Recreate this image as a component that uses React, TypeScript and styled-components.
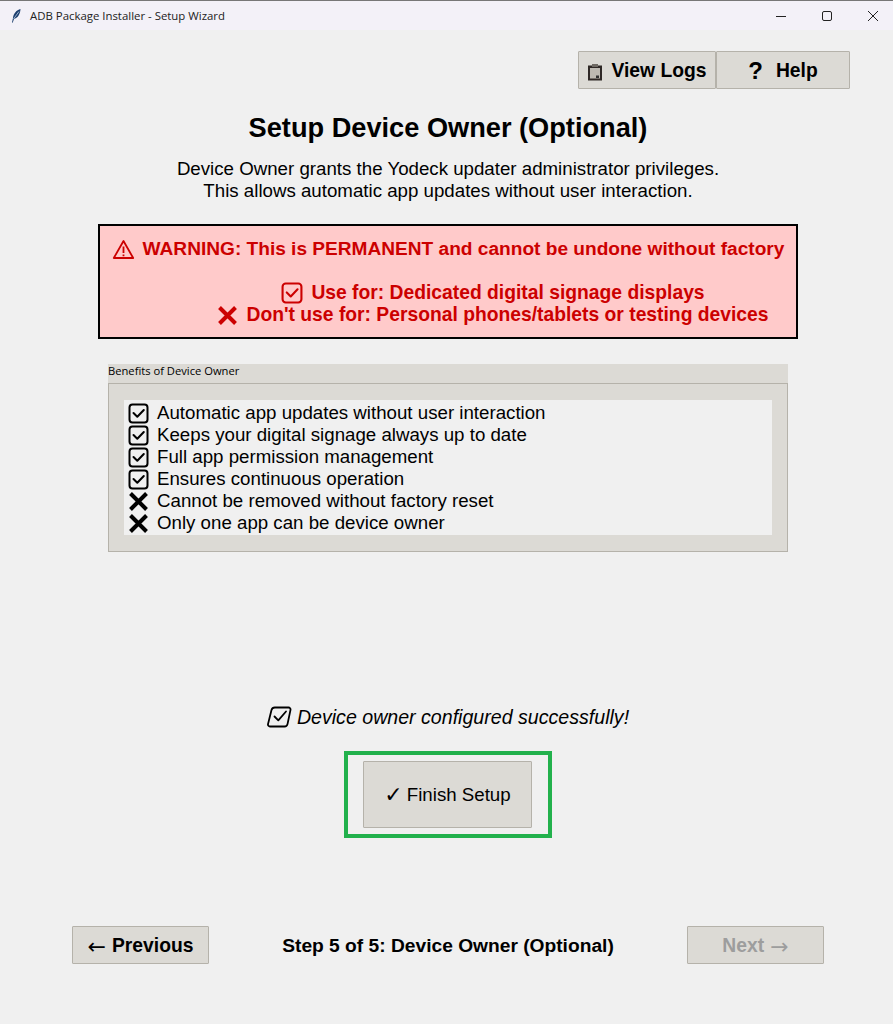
import React from 'react';
import styled, { createGlobalStyle } from 'styled-components';

const GlobalStyle = createGlobalStyle`
    html, body {
        margin: 0;
        padding: 0;
        background: #f0f0f0;
    }
    body {
        font-family: "Liberation Sans", Arial, sans-serif;
    }
`;

const benefits = [
    { ok: true, text: 'Automatic app updates without user interaction' },
    { ok: true, text: 'Keeps your digital signage always up to date' },
    { ok: true, text: 'Full app permission management' },
    { ok: true, text: 'Ensures continuous operation' },
    { ok: false, text: 'Cannot be removed without factory reset' },
    { ok: false, text: 'Only one app can be device owner' },
];

const CheckBox = ({ size = 21, color = '#000' }: { size?: number; color?: string }) => (
    <svg width={size} height={size} viewBox="0 0 21 21" fill="none" stroke={color} strokeWidth="2">
        <rect x="1.5" y="1.5" width="18" height="18" rx="3" />
        <path d="M5.5 10l3.8 3.8L15.800 7" strokeLinecap="round" strokeLinejoin="round" />
    </svg>
);

const Cross = ({ size = 21, color = '#000' }: { size?: number; color?: string }) => (
    <svg width={size} height={size} viewBox="0 0 21 21" fill="none" stroke={color} strokeWidth="4">
        <path d="M2.5 2.5l16 16M18.5 2.5l-16 16" />
    </svg>
);

const App = () => {
    return (
        <>
            <GlobalStyle />
            <Window>
                <TitleBar>
                    <svg width="16" height="16" viewBox="0 0 16 16">
                        <path d="M12.500 1C8.500 2 5.500 5.500 5 10l-1 4.500.7.2L6 11c3.500-.8 6.200-4.500 6.500-10z" fill="#1d3f6e" />
                        <path d="M11 3.500L5.500 11" stroke="#cfe0f5" strokeWidth="0.7" />
                    </svg>
                    <TitleText>ADB Package Installer - Setup Wizard</TitleText>
                    <WindowControls>
                        <svg width="12" height="12" viewBox="0 0 12 12" stroke="#222" fill="none">
                            <path d="M1 6.500h10" />
                        </svg>
                        <svg width="12" height="12" viewBox="0 0 12 12" stroke="#222" fill="none">
                            <rect x="1.500" y="1.500" width="9" height="9" rx="1.500" />
                        </svg>
                        <svg width="12" height="12" viewBox="0 0 12 12" stroke="#222" fill="none">
                            <path d="M1 1l10 10M11 1L1 11" />
                        </svg>
                    </WindowControls>
                </TitleBar>

                <Content>
                    <TopActions>
                        <TkButton $w={138} $h={38} $bold>
                            <LogsIcon>
                                <svg width="16" height="18" viewBox="0 0 16 18">
                                    <rect x="1" y="2.500" width="14" height="15" fill="#2f2826" />
                                    <rect x="3" y="5" width="10" height="10.500" fill="#bdb9b2" />
                                    <rect x="5" y="1" width="6" height="3" fill="#6f6a64" />
                                    <rect x="9" y="12.500" width="3" height="2.500" fill="#333" />
                                </svg>
                            </LogsIcon>
                            View Logs
                        </TkButton>
                        <TkButton $w={134} $h={38} $bold>
                            <HelpMark>?</HelpMark>
                            Help
                        </TkButton>
                    </TopActions>

                    <Title>Setup Device Owner (Optional)</Title>
                    <Intro>
                        Device Owner grants the Yodeck updater administrator privileges.
                        <br />
                        This allows automatic app updates without user interaction.
                    </Intro>

                    <WarningBox>
                        <WarningLine>
                            <svg width="23" height="21" viewBox="0 0 23 21" fill="none" stroke="#cc0000" strokeWidth="1.800">
                                <path d="M11.500 2L1.800 19h19.400z" strokeLinejoin="round" />
                                <path d="M11.500 7.500v6.500M11.500 15.500v1.800" />
                            </svg>
                            WARNING: This is PERMANENT and cannot be undone without factory
                        </WarningLine>
                        <WarningUse>
                            <WarningLine>
                                <CheckBox size={22} color="#cc0000" />
                                Use for: Dedicated digital signage displays
                            </WarningLine>
                            <WarningLine>
                                <Cross size={21} color="#cc0000" />
                                Don't use for: Personal phones/tablets or testing devices
                            </WarningLine>
                        </WarningUse>
                    </WarningBox>

                    <Benefits>
                        <BenefitsLabel>Benefits of Device Owner</BenefitsLabel>
                        <BenefitsFrame>
                            <BenefitsList>
                                {benefits.map(b => (
                                    <BenefitRow key={b.text}>
                                        {b.ok ? <CheckBox /> : <Cross />}
                                        {b.text}
                                    </BenefitRow>
                                ))}
                            </BenefitsList>
                        </BenefitsFrame>
                    </Benefits>

                    <Success>
                        <svg width="25" height="22" viewBox="0 0 25 22" fill="none" stroke="#000" strokeWidth="1.800">
                            <path d="M8 1.500h13.500a2 2 0 0 1 2 2.400l-3 14.200a3 3 0 0 1-3 2.400H3a2 2 0 0 1-2-2.400L4.500 4a3.500 3.500 0 0 1 3.500-2.500z" />
                            <path d="M7.500 10.500l3.800 3.800L19 5.500" strokeLinecap="round" strokeLinejoin="round" />
                        </svg>
                        Device owner configured successfully!
                    </Success>

                    <Highlight>
                        <TkButton $w={169} $h={67}>
                            <FinishCheck>✓</FinishCheck>
                            Finish Setup
                        </TkButton>
                    </Highlight>

                    <BottomNav>
                        <TkButton $w={137} $h={38} $bold>
                            <Arrow>←</Arrow>
                            Previous
                        </TkButton>
                        <StepLabel>Step 5 of 5: Device Owner (Optional)</StepLabel>
                        <TkButton $w={137} $h={38} $bold $disabled>
                            Next
                            <Arrow>→</Arrow>
                        </TkButton>
                    </BottomNav>
                </Content>
            </Window>
        </>
    );
};

const Window = styled.div`
    width: 893px;
    height: 1024px;
    background: #f0f0f0;
    overflow: hidden;
`;

const TitleBar = styled.div`
    height: 30px;
    box-sizing: border-box;
    border-top: 1px solid #777;
    background: #f3f1f8;
    display: flex;
    align-items: center;
    padding-left: 8px;
    gap: 6px;
`;

const TitleText = styled.span`
    font-family: "Open Sans", "Liberation Sans", sans-serif;
    font-size: 11.400px;
    color: #222;
`;

const WindowControls = styled.div`
    margin-left: auto;
    display: flex;
    gap: 34px;
    padding-right: 14px;
`;

const Content = styled.div`
    display: flex;
    flex-direction: column;
    align-items: center;
    width: 896px;
`;

const TkButton = styled.div<{ $w: number; $h: number; $bold?: boolean; $disabled?: boolean }>`
    width: ${props => props.$w}px;
    height: ${props => props.$h}px;
    box-sizing: border-box;
    padding-top: ${props => (props.$bold ? 2 : 0)}px;
    display: flex;
    align-items: center;
    justify-content: center;
    gap: 6px;
    background: #dcdad5;
    border: 1px solid #b5b2aa;
    border-radius: 1px;
    font-size: ${props => (props.$bold ? 19.3 : 18.7)}px;
    font-weight: ${props => (props.$bold ? 700 : 400)};
    color: ${props => (props.$disabled ? '#9d9d9d' : '#000')};
    white-space: pre;
`;

const FinishCheck = styled.span`
    font-family: "DejaVu Sans", sans-serif;
    font-size: 22px;
    font-weight: 400;
    margin-right: -2px;
`;

const Arrow = styled.span`
    font-family: "DejaVu Sans", sans-serif;
    font-size: 22px;
    font-weight: 400;
`;

const TopActions = styled.div`
    align-self: flex-end;
    display: flex;
    margin: 21px 46px 0 0;
`;

const LogsIcon = styled.span`
    display: flex;
    margin: 1px 2px 0 0;
`;

const HelpMark = styled.span`
    font-size: 24px;
    margin-right: 7px;
`;

const Title = styled.h1`
    margin: 24px 0 0;
    font-size: 27.200px;
    line-height: 30px;
    font-weight: 700;
    color: #000;
`;

const Intro = styled.p`
    margin: 15px 0 0;
    font-size: 18.700px;
    line-height: 22px;
    text-align: center;
    color: #000;
`;

const WarningBox = styled.div`
    width: 700px;
    height: 115px;
    margin-top: 22px;
    box-sizing: border-box;
    border: 2px solid #000;
    background: #ffcaca;
    padding-top: 12px;
    color: #cc0000;
    font-size: 19.100px;
    font-weight: 700;
    display: flex;
    flex-direction: column;
    align-items: center;
`;

const WarningLine = styled.div`
    height: 22px;
    display: flex;
    align-items: center;
    justify-content: center;
    gap: 8px;
    white-space: nowrap;
`;

const WarningUse = styled.div`
    margin: 22px 0 0 90px;
    font-size: 19.300px;
    display: flex;
    flex-direction: column;
`;

const Benefits = styled.div`
    width: 680px;
    margin-top: 25px;
`;

const BenefitsLabel = styled.div`
    height: 19px;
    line-height: 14px;
    background: #dcdad5;
    font-family: "Open Sans", "Liberation Sans", sans-serif;
    font-size: 11.200px;
    color: #000;
`;

const BenefitsFrame = styled.div`
    height: 169px;
    box-sizing: border-box;
    background: #dcdad5;
    border: 1px solid #b5b2aa;
    padding: 16px 15px;
`;

const BenefitsList = styled.div`
    height: 135px;
    box-sizing: border-box;
    background: #f0f0f0;
    padding-top: 2px;
`;

const BenefitRow = styled.div`
    height: 22px;
    display: flex;
    align-items: center;
    gap: 8px;
    padding-left: 4px;
    font-size: 18.700px;
    color: #000;
    white-space: nowrap;
`;

const Success = styled.div`
    margin-top: 153px;
    height: 24px;
    display: flex;
    align-items: center;
    gap: 5px;
    font-size: 19.600px;
    font-style: italic;
    color: #000;
`;

const Highlight = styled.div`
    margin-top: 22px;
    width: 208px;
    height: 87px;
    box-sizing: border-box;
    border: 4px solid #22b14c;
    padding-left: 15px;
    display: flex;
    align-items: center;
`;

const BottomNav = styled.div`
    align-self: stretch;
    margin: 88px 72px 0;
    display: flex;
    align-items: center;
    justify-content: space-between;
`;

const StepLabel = styled.div`
    padding-top: 2px;
    font-size: 19.200px;
    font-weight: 700;
    color: #000;
`;

export default App;
